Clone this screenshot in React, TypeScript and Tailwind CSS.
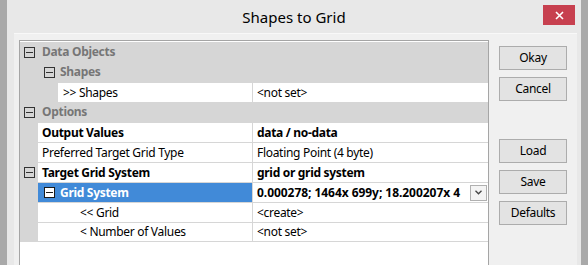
import React from "react";

const font = { fontFamily: '"Noto Sans", "Open Sans", sans-serif' };

function Minus() {
  return (
    <div className="w-[11px] h-[11px] border border-[#333] flex items-center justify-center shrink-0">
      <div className="w-[7px] h-[1px] bg-[#333]" />
    </div>
  );
}

function Header({ label, level }: { label: string; level: 0 | 1 }) {
  return (
    <div className="h-[20px] flex items-center bg-[#d6d6d6]">
      {level === 0 ? (
        <>
          <div className="w-[18px] flex justify-center pl-[1px]">
            <Minus />
          </div>
          <span className="pl-[4px] font-bold text-[#767676]">{label}</span>
        </>
      ) : (
        <>
          <div className="w-[18px]" />
          <div className="pl-[6px]">
            <Minus />
          </div>
          <span className="pl-[5px] font-bold text-[#767676]">{label}</span>
        </>
      )}
    </div>
  );
}

function Item({
  name,
  value,
  bold = false,
  nameIndent = 4,
  grayTo = 18,
  gutterBox = false,
  last = false,
}: {
  name: string;
  value: string;
  bold?: boolean;
  nameIndent?: number;
  grayTo?: number;
  gutterBox?: boolean;
  last?: boolean;
}) {
  return (
    <div className="h-[20px] flex bg-[#d6d6d6]">
      <div
        className="flex items-center justify-center pl-[1px] shrink-0"
        style={{ width: grayTo }}
      >
        {gutterBox && <Minus />}
      </div>
      <div className={`flex flex-1 bg-white border-t border-[#d6d6d6] ${last ? "border-b" : ""}`}>
        <div
          className={`shrink-0 flex items-center border-r border-[#d6d6d6] ${bold ? "font-bold" : ""} text-black`}
          style={{ paddingLeft: nameIndent, width: 233 - grayTo }}
        >
          {name}
        </div>
        <div className={`flex-1 flex items-center pl-[4px] ${bold ? "font-bold" : ""} text-black`}>
          {value}
        </div>
      </div>
    </div>
  );
}

function Btn({ label }: { label: string }) {
  return (
    <div className="w-[68px] h-[24px] border border-[#acacac] bg-[#e3e3e3] flex items-center justify-center text-[12px] text-black">
      {label}
    </div>
  );
}

export default function App() {
  return (
    <div
      className="w-[588px] h-[265px] flex bg-[#a9a9a9] overflow-hidden text-[12px] tracking-[-0.3px]"
      style={font}
    >
      <div className="w-[7px] bg-[#a9a9a9]" />
      <div className="w-[574px] bg-[#e8e8e8] flex flex-col">
        <div className="h-[33px] relative flex items-center justify-center shrink-0">
          <span className="text-[15px] text-black pt-[2px] tracking-normal">Shapes to Grid</span>
          <div className="absolute left-[536px] top-[5px] w-[32px] h-[20px] bg-[#c7404f] flex items-center justify-center">
            <svg width="9" height="9" viewBox="0 0 9 9">
              <path d="M1 1 L8 8 M8 1 L1 8" stroke="white" strokeWidth="1.6" />
            </svg>
          </div>
        </div>
        <div className="flex-1 ml-[7px] mr-[4px] bg-[#f0f0f0] border-t border-[#f8f8f8] flex">
          <div className="ml-[5px] mt-[6px] w-[470px] border border-[#a5a5a5] bg-white self-stretch mb-[-4px] flex flex-col">
            <div className="flex flex-col pt-[1px]">
              <Header label="Data Objects" level={0} />
              <Header label="Shapes" level={1} />
              <Item name=">> Shapes" value="<not set>" grayTo={38} nameIndent={5} />
              <Header label="Options" level={0} />
              <Item name="Output Values" value="data / no-data" bold />
              <Item name="Preferred Target Grid Type" value="Floating Point (4 byte)" />
              <Item name="Target Grid System" value="grid or grid system" bold gutterBox />
              <div className="h-[20px] flex bg-[#d6d6d6]">
                <div className="w-[18px] shrink-0" />
                <div className="flex flex-1 bg-white border-t border-[#d6d6d6]">
                  <div className="w-[215px] shrink-0 flex items-center bg-[#418ad8] font-bold text-white pl-[6px] border-r border-[#d6d6d6]">
                    <div className="w-[11px] h-[11px] border border-[#1a1a1a] bg-white flex items-center justify-center">
                      <div className="w-[7px] h-[1px] bg-[#1a1a1a]" />
                    </div>
                    <span className="pl-[5px]">Grid System</span>
                  </div>
                  <div className="flex-1 flex items-center pl-[4px] font-bold text-black overflow-hidden">
                    <span className="whitespace-nowrap overflow-hidden flex-1 tracking-[-0.05px]">0.000278; 1464x 699y; 18.200207x 4</span>
                    <div className="w-[17px] h-[16px] border border-[#b0b0b0] bg-[#f4f4f4] flex items-center justify-center mr-[1px] ml-[2px] shrink-0">
                      <svg width="7" height="5" viewBox="0 0 7 5">
                        <path d="M0.5 0.8 L3.5 3.8 L6.5 0.8" stroke="#444" strokeWidth="1.3" fill="none" />
                      </svg>
                    </div>
                  </div>
                </div>
              </div>
              <Item name="<< Grid" value="<create>" nameIndent={42} />
              <Item name="< Number of Values" value="<not set>" nameIndent={42} last />
            </div>
          </div>
          <div className="ml-[10px] mt-[12px] flex flex-col">
            <Btn label="Okay" />
            <div className="h-[7px]" />
            <Btn label="Cancel" />
            <div className="h-[38px]" />
            <Btn label="Load" />
            <div className="h-[7px]" />
            <Btn label="Save" />
            <div className="h-[7px]" />
            <Btn label="Defaults" />
          </div>
        </div>
      </div>
      <div className="w-[7px] bg-[#a9a9a9]" />
    </div>
  );
}
